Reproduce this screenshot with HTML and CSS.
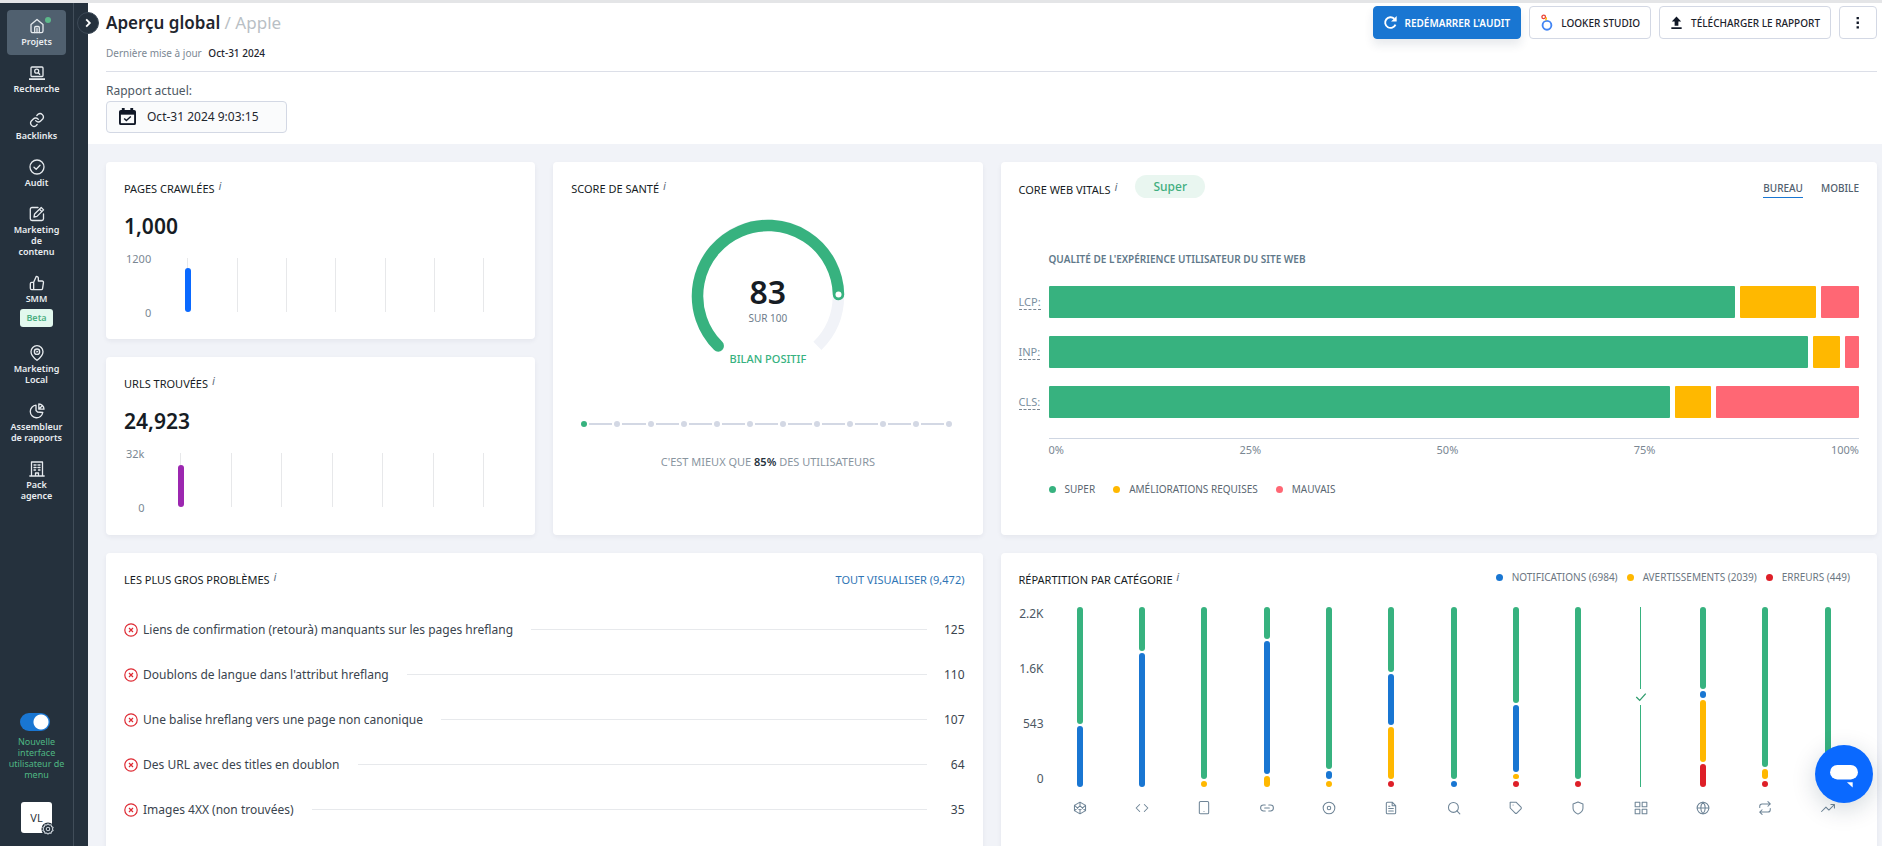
FILE: index.html
```html
<!DOCTYPE html>
<html lang="fr">
<head>
<meta charset="utf-8">
<title>Aperçu global / Apple</title>
<link rel="stylesheet" href="styles.css">
</head>
<body>
<div class="app">
  <aside class="sidebar">
    <nav class="nav">
      <a class="nav-item active" href="#"><span class="nav-dot"></span>
        <svg class="nav-icon" viewBox="0 0 16 16"><path d="M2 6.500 8 1.500l6 5V13a1.700 1.700 0 0 1-1.700 1.700H3.700A1.700 1.700 0 0 1 2 13z"/><path d="M5.700 14.500V9.500a1 1 0 0 1 1-1h2.600a1 1 0 0 1 1 1v5M8 10.500v4"/></svg>
        Projets</a>
      <a class="nav-item" href="#">
        <svg class="nav-icon" viewBox="0 0 16 16"><rect x="2" y="2" width="12" height="9.500" rx="1"/><path d="M0 14.200h16" stroke-width="1.800"/><circle cx="7.700" cy="6.200" r="2"/><path d="m9.300 7.800 1.400 1.400"/></svg>
        Recherche</a>
      <a class="nav-item" href="#">
        <svg class="nav-icon" viewBox="0 0 24 24"><path stroke-width="2" d="M10 13a5 5 0 0 0 7.500.5l3-3a5 5 0 0 0-7-7l-1.700 1.700M14 11a5 5 0 0 0-7.500-.5l-3 3a5 5 0 0 0 7 7l1.700-1.700"/></svg>
        Backlinks</a>
      <a class="nav-item" href="#">
        <svg class="nav-icon" viewBox="0 0 16 16"><circle cx="8" cy="8" r="7"/><path d="m5 8.200 2.200 2.100L11 6.200"/></svg>
        Audit</a>
      <a class="nav-item" href="#">
        <svg class="nav-icon" viewBox="0 0 16 16"><path d="M9 1.500H3A1.700 1.700 0 0 0 1.300 3.200v9.600A1.700 1.700 0 0 0 3 14.500h9.800a1.700 1.700 0 0 0 1.700-1.700V8"/><path d="m5 11 .6-3 6.600-6.500 2.400 2.400L8 10.400zM10.500 3.200l2.400 2.400"/></svg>
        Marketing<br>de<br>contenu</a>
      <a class="nav-item" href="#">
        <svg class="nav-icon" viewBox="0 0 24 24"><path stroke-width="2" d="M14 9V5a3 3 0 0 0-3-3l-4 9v11h11.300a2 2 0 0 0 2-1.700l1.400-9a2 2 0 0 0-2-2.300zM7 22H4a2 2 0 0 1-2-2v-7a2 2 0 0 1 2-2h3"/></svg>
        SMM<span class="beta">Beta</span></a>
      <a class="nav-item" href="#">
        <svg class="nav-icon" viewBox="0 0 24 24"><path stroke-width="2" d="M21 10c0 6-9 13-9 13s-9-7-9-13a9 9 0 0 1 18 0z"/><circle stroke-width="2" cx="12" cy="10" r="4"/><circle cx="12" cy="10" r="1"/></svg>
        Marketing<br>Local</a>
      <a class="nav-item" href="#">
        <svg class="nav-icon" viewBox="0 0 16 16"><path d="M7 2.200a6.300 6.300 0 1 0 6.800 7.300L8.500 9 7 7.500z"/><path d="M9.800 1v5.200H15A5.300 5.300 0 0 0 9.800 1zM10 6l3-3"/></svg>
        Assembleur<br>de rapports</a>
      <a class="nav-item" href="#">
        <svg class="nav-icon" viewBox="0 0 16 16"><path d="M2.500 15V1h11v14M.8 15h14.400M6.500 15v-3h3v3M5 4h1.500M9.500 4H11M5 6.500h1.500M9.500 6.500H11M5 9h1.500M9.500 9H11M8 4v0M8 6.500v0"/></svg>
        Pack<br>agence</a>
    </nav>
    <div class="side-foot">
      <input class="switch" id="newui" type="checkbox" checked>
      <label class="switch-label" for="newui">Nouvelle interface utilisateur de menu</label>
      <button class="avatar" type="button">VL
        <svg class="gear" viewBox="0 0 16 16"><circle cx="8" cy="8" r="7.500" fill="#25313d" stroke="none"/><path d="m8 2.200 1.500 1.200 2-.1.600 1.900 1.700 1.100-.8 1.700.8 1.700-1.700 1.100-.6 1.900-2-.1L8 13.800l-1.500-1.200-2 .1-.6-1.900-1.700-1.100L3 8l-.8-1.700 1.700-1.100.6-1.900 2 .1z"/><circle cx="8" cy="8" r="2"/></svg>
      </button>
    </div>
    <button class="expand" type="button" aria-label="Déplier le menu"><svg viewBox="0 0 10 10"><path d="m3.500 2 3 3-3 3"/></svg></button>
  </aside>

  <main class="main">
    <header class="header">
      <div class="head-row">
        <h1 class="title">Aperçu global <span>/ Apple</span></h1>
        <div class="actions">
          <button class="btn primary" type="button"><svg viewBox="0 0 16 16"><path d="M13.300 10.200A5.700 5.700 0 1 1 12 4" fill="none" stroke="#fff" stroke-width="2"/><path d="M14.600 1v6H8.600z" fill="#fff"/></svg>REDÉMARRER L'AUDIT</button>
          <button class="btn" type="button"><svg viewBox="0 0 16 18"><circle cx="8.500" cy="12" r="4.700" fill="none" stroke="#4285f4" stroke-width="2"/><circle cx="5" cy="3" r="1.900" fill="none" stroke="#ea4335" stroke-width="1.400"/><path d="M7.600 3.500a2.600 2.600 0 0 1-.8 3.200" fill="none" stroke="#fbbc04" stroke-width="1.500"/></svg>LOOKER STUDIO</button>
          <button class="btn" type="button"><svg viewBox="0 0 16 16"><path d="M8 1.500 13 7h-3v4.500H6V7H3zM2.500 13h11v2h-11z" fill="#111827"/></svg>TÉLÉCHARGER LE RAPPORT</button>
          <button class="btn more" type="button" aria-label="Plus"><svg viewBox="0 0 16 16"><path d="M7 2h2.500v2.500H7zM7 7h2.500v2.500H7zM7 12h2.500v2.500H7z" fill="#111827"/></svg></button>
        </div>
      </div>
      <p class="updated">Dernière mise à jour <b>Oct-31 2024</b></p>
      <div class="report">
        <span class="report-label">Rapport actuel:</span>
        <button class="report-btn" type="button">
          <svg viewBox="0 0 18 20"><path d="M3 0h3v2h6V0h3v2h1a2 2 0 0 1 2 2v12a2 2 0 0 1-2 2H2a2 2 0 0 1-2-2V4a2 2 0 0 1 2-2h1z" fill="#111827"/><path d="M2 7h14v9H2z" fill="#fafbfc"/><path d="m5.500 11 2.300 2.300L12.500 9" fill="none" stroke="#111827" stroke-width="1.500"/></svg>
          Oct-31 2024 9:03:15</button>
      </div>
    </header>

    <div class="grid">
      <div class="stack">
        <section class="card">
          <h2 class="card-title">PAGES CRAWLÉES <i>i</i></h2>
          <div class="big">1,000</div>
          <div class="mini">
            <div class="mini-y"><span>1200</span><span>0</span></div>
            <div class="mini-plot"><span><b class="blue" style="height:82%"></b></span><span></span><span></span><span></span><span></span><span></span><span></span></div>
          </div>
        </section>
        <section class="card">
          <h2 class="card-title">URLS TROUVÉES <i>i</i></h2>
          <div class="big">24,923</div>
          <div class="mini">
            <div class="mini-y"><span>32k</span><span>0</span></div>
            <div class="mini-plot"><span><b class="purple" style="height:77%"></b></span><span></span><span></span><span></span><span></span><span></span><span></span></div>
          </div>
        </section>
      </div>

      <section class="card score">
        <h2 class="card-title">SCORE DE SANTÉ <i>i</i></h2>
        <div class="gauge">
          <svg viewBox="0 0 154 154"><path d="M26.800 126.200A70.500 70.500 0 1 1 126.400 126.900" fill="none" stroke="#f1f3f8" stroke-width="11.500"/><path d="M27.200 126.900A70.500 70.500 0 1 1 147.500 75.500" fill="none" stroke="#37b27f" stroke-width="11.500" stroke-linecap="round"/><circle cx="147.500" cy="75.500" r="3" fill="#fff"/></svg>
          <div class="gauge-text"><strong>83</strong><span>SUR 100</span></div>
        </div>
        <div class="verdict">BILAN POSITIF</div>
        <div class="track"><b class="on"></b><i></i><b></b><i></i><b></b><i></i><b></b><i></i><b></b><i></i><b></b><i></i><b></b><i></i><b></b><i></i><b></b><i></i><b></b><i></i><b></b><i></i><b></b></div>
        <p class="better">C'EST MIEUX QUE <b>85%</b> DES UTILISATEURS</p>
      </section>

      <section class="card vitals">
        <div class="vitals-head">
          <h2 class="card-title">CORE WEB VITALS <i>i</i></h2>
          <span class="pill">Super</span>
          <div class="tabs"><button class="tab selected" type="button">BUREAU</button><button class="tab" type="button">MOBILE</button></div>
        </div>
        <h3 class="vitals-sub">QUALITÉ DE L'EXPÉRIENCE UTILISATEUR DU SITE WEB</h3>
        <div class="vital"><span class="vital-name"><abbr>LCP:</abbr></span><div class="vital-bar"><b class="green" style="flex-grow:686"></b><b class="amber" style="flex-grow:76"></b><b class="rose" style="flex-grow:38"></b></div></div>
        <div class="vital"><span class="vital-name"><abbr>INP:</abbr></span><div class="vital-bar"><b class="green" style="flex-grow:759"></b><b class="amber" style="flex-grow:27"></b><b class="rose" style="flex-grow:14"></b></div></div>
        <div class="vital"><span class="vital-name"><abbr>CLS:</abbr></span><div class="vital-bar"><b class="green" style="flex-grow:621"></b><b class="amber" style="flex-grow:36"></b><b class="rose" style="flex-grow:143"></b></div></div>
        <div class="axis"><span>0%</span><span>25%</span><span>50%</span><span>75%</span><span>100%</span></div>
        <div class="legend"><span><b class="green"></b>SUPER</span><span><b class="amber"></b>AMÉLIORATIONS REQUISES</span><span><b class="rose"></b>MAUVAIS</span></div>
      </section>

      <section class="card issues">
        <div class="issues-head"><h2 class="card-title">LES PLUS GROS PROBLÈMES <i>i</i></h2><a class="see-all" href="#">TOUT VISUALISER (9,472)</a></div>
        <ul class="issue-list">
          <li><svg viewBox="0 0 14 14"><circle cx="7" cy="7" r="6.200"/><path d="m5 5 4 4M9 5 5 9"/></svg><span>Liens de confirmation (retourà) manquants sur les pages hreflang</span><hr><em>125</em></li>
          <li><svg viewBox="0 0 14 14"><circle cx="7" cy="7" r="6.200"/><path d="m5 5 4 4M9 5 5 9"/></svg><span>Doublons de langue dans l'attribut hreflang</span><hr><em>110</em></li>
          <li><svg viewBox="0 0 14 14"><circle cx="7" cy="7" r="6.200"/><path d="m5 5 4 4M9 5 5 9"/></svg><span>Une balise hreflang vers une page non canonique</span><hr><em>107</em></li>
          <li><svg viewBox="0 0 14 14"><circle cx="7" cy="7" r="6.200"/><path d="m5 5 4 4M9 5 5 9"/></svg><span>Des URL avec des titles en doublon</span><hr><em>64</em></li>
          <li><svg viewBox="0 0 14 14"><circle cx="7" cy="7" r="6.200"/><path d="m5 5 4 4M9 5 5 9"/></svg><span>Images 4XX (non trouvées)</span><hr><em>35</em></li>
        </ul>
      </section>

      <section class="card cats">
        <div class="cats-head">
          <h2 class="card-title">RÉPARTITION PAR CATÉGORIE <i>i</i></h2>
          <div class="cats-legend"><span><b class="blue2"></b>NOTIFICATIONS (6984)</span><span><b class="amber"></b>AVERTISSEMENTS (2039)</span><span><b class="red"></b>ERREURS (449)</span></div>
        </div>
        <div class="cats-body">
          <div class="cats-y"><span>2.2K</span><span>1.6K</span><span>543</span><span>0</span></div>
          <div class="cats-plot">
            <div class="cat"><div class="bar"><b class="green" style="flex-grow:117"></b><b class="blue2" style="flex-grow:61"></b></div><svg viewBox="0 0 24 24"><path d="m12 2 9.500 5.500v9L12 22l-9.500-5.500v-9zM12 2v6.500M12 22v-6.500M2.500 7.500 12 15.500l9.500-8M2.500 16.500l9.500-8 9.500 8"/></svg></div>
            <div class="cat"><div class="bar"><b class="green" style="flex-grow:44"></b><b class="blue2" style="flex-grow:134"></b></div><svg viewBox="0 0 24 24"><path d="m16 18 6-6-6-6M8 6l-6 6 6 6"/></svg></div>
            <div class="cat"><div class="bar"><b class="green" style="flex-grow:172"></b><b class="amber" style="flex-grow:6"></b></div><svg viewBox="0 0 24 24"><rect x="4" y="1" width="16" height="21" rx="2"/><path d="M12 18h.010"/></svg></div>
            <div class="cat"><div class="bar"><b class="green" style="flex-grow:32"></b><b class="blue2" style="flex-grow:133"></b><b class="amber" style="flex-grow:11"></b></div><svg viewBox="0 0 24 24"><path d="M15 7h3a5 5 0 0 1 0 10h-3M9 17H6A5 5 0 0 1 6 7h3M8 12h8"/></svg></div>
            <div class="cat"><div class="bar"><b class="green" style="flex-grow:162"></b><b class="blue2" style="flex-grow:8"></b><b class="amber" style="flex-grow:6"></b></div><svg viewBox="0 0 24 24"><circle cx="12" cy="12" r="10"/><circle cx="12" cy="12" r="3"/></svg></div>
            <div class="cat"><div class="bar"><b class="green" style="flex-grow:65"></b><b class="blue2" style="flex-grow:51"></b><b class="amber" style="flex-grow:52"></b><b class="red" style="flex-grow:6"></b></div><svg viewBox="0 0 24 24"><path d="M14 2H6a2 2 0 0 0-2 2v16a2 2 0 0 0 2 2h12a2 2 0 0 0 2-2V8zM14 2v6h6M16 13H8M16 17H8M10 9H8"/></svg></div>
            <div class="cat"><div class="bar"><b class="green" style="flex-grow:172"></b><b class="blue2" style="flex-grow:6"></b></div><svg viewBox="0 0 24 24"><circle cx="11" cy="11" r="8.500"/><path d="m22 22-5-5"/></svg></div>
            <div class="cat"><div class="bar"><b class="green" style="flex-grow:96"></b><b class="blue2" style="flex-grow:67"></b><b class="amber" style="flex-grow:5"></b><b class="red" style="flex-grow:6"></b></div><svg viewBox="0 0 24 24"><path d="m20.600 13.400-7.200 7.200a2 2 0 0 1-2.800 0L2 12V2h10l8.600 8.600a2 2 0 0 1 0 2.800zM7 7h.010"/></svg></div>
            <div class="cat"><div class="bar"><b class="green" style="flex-grow:172"></b><b class="red" style="flex-grow:6"></b></div><svg viewBox="0 0 24 24"><path d="M12 22.500s8.500-4 8.500-10V5L12 1.800 3.500 5v7.500c0 6 8.500 10 8.500 10z"/></svg></div>
            <div class="cat"><div class="bar clear"><b class="green"></b><svg viewBox="0 0 14 14"><path d="m1.500 7 4 4 7-8"/></svg><b class="green"></b></div><svg viewBox="0 0 24 24"><path d="M2 2h8v8H2zM14 2h8v8h-8zM14 14h8v8h-8zM2 14h8v8H2z"/></svg></div>
            <div class="cat"><div class="bar"><b class="green" style="flex-grow:82"></b><b class="blue2" style="flex-grow:7"></b><b class="amber" style="flex-grow:62"></b><b class="red" style="flex-grow:23"></b></div><svg viewBox="0 0 24 24"><circle cx="12" cy="12" r="10"/><path d="M2 12h20M12 2a15 15 0 0 1 0 20 15 15 0 0 1 0-20z"/></svg></div>
            <div class="cat"><div class="bar"><b class="green" style="flex-grow:160"></b><b class="amber" style="flex-grow:10"></b><b class="red" style="flex-grow:6"></b></div><svg viewBox="0 0 24 24"><path d="m17 1 4 4-4 4M3 11V9a4 4 0 0 1 4-4h14M7 23l-4-4 4-4M21 13v2a4 4 0 0 1-4 4H3"/></svg></div>
            <div class="cat"><div class="bar"><b class="green" style="flex-grow:172"></b><b class="red" style="flex-grow:6"></b></div><svg viewBox="0 0 24 24"><path d="m23 6-9.500 9.500-5-5L1 18M17 6h6v6"/></svg></div>
          </div>
        </div>
      </section>
    </div>
  </main>
</div>
<button class="chat" type="button" aria-label="Chat"><svg viewBox="0 0 30 26"><rect x="0" y="1" width="29" height="15" rx="7.500" fill="#fff"/><path d="M17.500 19h6v5.500z" fill="#fff"/></svg></button>
</body>
</html>
```

FILE: styles.css
```css
* { box-sizing: border-box; }
body { margin: 0; font-family: "Noto Sans", "Open Sans", sans-serif; font-size: 12px; line-height: 16px; color: #2d3640; background: #f1f3f8; }
h1, h2, h3, p, ul { margin: 0; padding: 0; font-weight: 400; }
button { font: inherit; color: inherit; cursor: pointer; padding: 0; border: 0; background: none; }
a { text-decoration: none; color: inherit; }
svg { display: block; flex: none; }

.app { display: flex; height: 100vh; overflow: hidden; border-top: 3px solid #e4e5e7; }

/* Sidebar */
.sidebar { position: relative; flex: none; width: 88px; display: flex; flex-direction: column; justify-content: space-between; background: linear-gradient(90deg, #25313d 73px, #414d59 73px, #414d59 74px, #25313d 74px); }
.nav { width: 59px; margin: 7px 0 0 7px; display: flex; flex-direction: column; gap: 2px; }
.nav-item { position: relative; display: flex; flex-direction: column; align-items: center; padding: 8px 0; border-radius: 4px; font-size: 9px; line-height: 11px; font-weight: 600; color: #e9edf0; text-align: center; white-space: nowrap; }
.nav-item.active { background: #50606f; }
.nav-icon { width: 16px; height: 16px; margin-bottom: 2px; fill: none; stroke: #e6eaee; stroke-width: 1.300; stroke-linecap: round; stroke-linejoin: round; }
.nav-dot { position: absolute; left: 38px; top: 7px; width: 6px; height: 6px; border-radius: 50%; background: #5cb88a; }
.beta { margin-top: 5px; padding: 0 6px; border-radius: 3px; background: #e2f8ee; color: #4caf82; font-size: 9px; line-height: 18px; }
.side-foot { width: 73px; padding: 0 4px 13px; display: flex; flex-direction: column; align-items: center; }
.switch { appearance: none; width: 30px; height: 18px; margin: 0 4px 5px 0; border-radius: 9px; background: radial-gradient(circle at 21px 9px, #fff 7px, #1976d2 8px); }
.switch-label { width: 60px; color: #4fb783; font-size: 9px; line-height: 11px; text-align: center; }
.avatar { position: relative; width: 31px; height: 31px; margin-top: 22px; border-radius: 3px; background: #fff; font-size: 11px; }
.gear { position: absolute; right: -3px; bottom: -3px; width: 14px; height: 14px; fill: none; stroke: #cfd6dd; stroke-width: 1.200; }
.expand { position: absolute; right: -11px; top: 9px; width: 22px; height: 22px; display: grid; place-items: center; border: 1px solid #3c4956; border-radius: 50%; background: #25313d; z-index: 2; }
.expand svg { width: 12px; height: 12px; fill: none; stroke: #fff; stroke-width: 1.500; }

/* Header */
.main { flex: 1; min-width: 0; }
.header { height: 141px; padding: 3px 5px 0 18px; background: #fff; }
.head-row { display: flex; justify-content: space-between; align-items: center; height: 33px; }
.title { font-size: 17px; line-height: 20px; font-weight: 600; color: #1f262e; }
.title span { font-weight: 400; color: #b9bfc5; }
.actions { display: flex; gap: 8px; }
.btn { display: flex; align-items: center; gap: 7px; height: 33px; padding: 0 10px 0 9px; border: 1px solid #d3d8e4; border-radius: 4px; font-size: 10px; font-weight: 500; color: #1b222b; white-space: nowrap; background: #fff; }
.btn svg { width: 15px; height: 17px; }
.btn.primary { background: #1976d2; border-color: #1976d2; color: #fff; font-weight: 600; box-shadow: 0 6px 10px rgba(30, 50, 80, .1); }
.btn.more { width: 38px; padding: 0 10px; }
.updated { height: 33px; padding-top: 6px; border-bottom: 1px solid #dcdfe8; font-size: 10px; color: #7c8894; }
.updated b { margin-left: 4px; font-weight: 500; color: #1f262e; }
.report { display: flex; flex-direction: column; align-items: flex-start; padding-top: 11px; gap: 2px; }
.report-label { color: #4d5863; }
.report-btn { display: flex; align-items: center; gap: 11px; height: 32px; min-width: 181px; padding: 0 22px 0 12px; border: 1px solid #d3d8e4; border-radius: 4px; background: #fafbfc; color: #1f262e; }
.report-btn svg { width: 17px; height: 19px; }

/* Cards */
.grid { display: grid; grid-template-columns: repeat(4, 1fr); grid-template-rows: 373px 373px; gap: 18px; padding: 18px 5px 0 18px; }
.stack { display: grid; grid-template-rows: 177px 1fr; gap: 18px; min-width: 0; }
.card { min-width: 0; padding: 18px; border-radius: 4px; background: #fff; box-shadow: 0 2px 5px rgba(30, 40, 60, .06); }
.card-title { font-size: 11px; line-height: 18px; color: #161c24; white-space: nowrap; }
.card-title i { margin-left: 1px; vertical-align: 3px; font-size: 11px; line-height: 10px; color: #5f7080; font-family: "DejaVu Sans", sans-serif; }
.green { background: #37b27f; }
.amber { background: #ffb800; }
.rose { background: #ff6774; }
.red { background: #de1f28; }
.blue { background: #0a69ff; }
.blue2 { background: #1976d2; }
.purple { background: #9c27b0; }

.big { margin-top: 16px; font-size: 21px; line-height: 24px; font-weight: 600; color: #161c24; }
.mini { display: flex; margin-top: 13px; }
.mini-y { display: flex; flex-direction: column; justify-content: space-between; height: 70px; padding-left: 2px; text-align: right; font-size: 11px; color: #7a8793; }
.mini-plot { flex: 1; display: flex; justify-content: space-between; height: 54px; margin: 7px 33px 0 36px; }
.mini-plot span { display: flex; justify-content: center; align-items: flex-end; width: 1px; background: #e7e8ea; }
.mini-plot b { flex: none; width: 6px; border-radius: 3px; }

.score { display: flex; flex-direction: column; }
.gauge { position: relative; width: 154px; height: 132px; margin: 21px auto 0; }
.gauge svg { width: 154px; height: 154px; }
.gauge-text { position: absolute; inset: 0; display: flex; flex-direction: column; align-items: center; padding-top: 55px; }
.gauge-text strong { font-size: 32px; line-height: 36px; font-weight: 600; color: #161c24; }
.gauge-text span { font-size: 10px; line-height: 16px; color: #6c7c8a; }
.verdict { text-align: center; font-size: 11px; font-weight: 500; color: #37b27f; }
.track { display: flex; align-items: center; gap: 2px; margin: 54px 12px 0 10px; }
.track b { flex: none; width: 6px; height: 6px; border-radius: 50%; background: #d3d8e4; }
.track b.on { background: #37b27f; }
.track i { flex: 1; height: 2px; background: #d3d8e4; }
.better { margin-top: 27px; text-align: center; font-size: 11px; color: #8995a0; }
.better b { font-weight: 600; color: #25313d; }

.vitals-head { display: flex; align-items: center; margin: -7px 0 0; height: 28px; }
.vitals-head .card-title { padding-top: 6px; }
.pill { margin: -2px 0 0 18px; padding: 0 18px; border-radius: 12px; line-height: 23px; background: #e9f6f0; color: #3fae7f; font-weight: 500; }
.tabs { align-self: flex-start; margin-left: auto; display: flex; gap: 18px; padding-top: 6px; }
.tab { font-size: 10px; line-height: 18px; font-weight: 500; color: #51606e; border-bottom: 1px solid transparent; }
.tab.selected { border-color: #1976d2; }
.vitals-sub { margin: 50px 0 19px 30px; font-size: 10px; font-weight: 600; color: #61798a; }
.vital { display: flex; height: 32px; margin-bottom: 18px; align-items: center; }
.vital-name { width: 30px; font-size: 11px; color: #7a8fa0; }
.vital-name abbr { border-bottom: 1px dashed #7a8793; text-decoration: none; }
.vital-bar { flex: 1; display: flex; gap: 5px; height: 100%; }
.vital-bar b { flex: 1 1 0; border-radius: 1px; }
.axis { display: flex; justify-content: space-between; margin: 20px 0 0 30px; padding-top: 3px; border-top: 1px solid #cfd6e2; font-size: 11px; color: #7a8793; }
.legend { display: flex; gap: 18px; margin: 23px 0 0 30px; font-size: 10px; color: #5a6671; }
.legend span, .cats-legend span { display: flex; align-items: center; gap: 9px; white-space: nowrap; }
.legend b, .cats-legend b { width: 7px; height: 7px; border-radius: 50%; }

.issues { grid-column: span 2; }
.vitals, .cats { grid-column: span 2; }
.issues-head, .cats-head { display: flex; justify-content: space-between; align-items: center; }
.see-all { font-size: 11px; color: #2f75b5; }
.issue-list { list-style: none; margin-top: 18px; }
.issue-list li { display: flex; align-items: center; height: 45px; color: #3a444e; }
.issue-list svg { width: 14px; height: 14px; margin-right: 5px; fill: none; stroke: #de2a33; stroke-width: 1.200; }
.issue-list hr { flex: 1; height: 1px; margin: 0 16px 0 18px; border: 0; background: #e7e9ec; }
.issue-list em { min-width: 22px; text-align: right; font-style: normal; }

.cats-legend { display: flex; gap: 9px; margin: -6px 9px 0 0; font-size: 10px; color: #6c7782; }
.cats-body { display: flex; margin-top: 17px; }
.cats-y { display: flex; flex-direction: column; justify-content: space-between; height: 181px; width: 25px; text-align: right; color: #4d5863; }
.cats-plot { flex: 1; display: flex; margin: 1px 0 0 5px; }
.cat { flex: 1; display: flex; flex-direction: column; align-items: center; gap: 14px; }
.cat > svg { width: 14px; height: 14px; fill: none; stroke: #6f8597; stroke-width: 1.800; stroke-linecap: round; stroke-linejoin: round; }
.bar { display: flex; flex-direction: column; align-items: center; gap: 2px; height: 180px; width: 6px; }
.bar b { flex: 1 1 0; width: 100%; border-radius: 3px; }
.bar.clear b { width: 1px; border-radius: 0; }
.bar.clear svg { width: 12px; height: 12px; fill: none; stroke: #2f9c6d; stroke-width: 1.500; }

.chat { position: fixed; right: 9px; bottom: 43px; width: 58px; height: 58px; display: grid; place-items: center; border-radius: 50%; background: #0a69ff; box-shadow: 0 6px 24px rgba(0, 40, 60, .18); }
.chat svg { width: 29px; height: 25px; margin-top: 5px; }
```
